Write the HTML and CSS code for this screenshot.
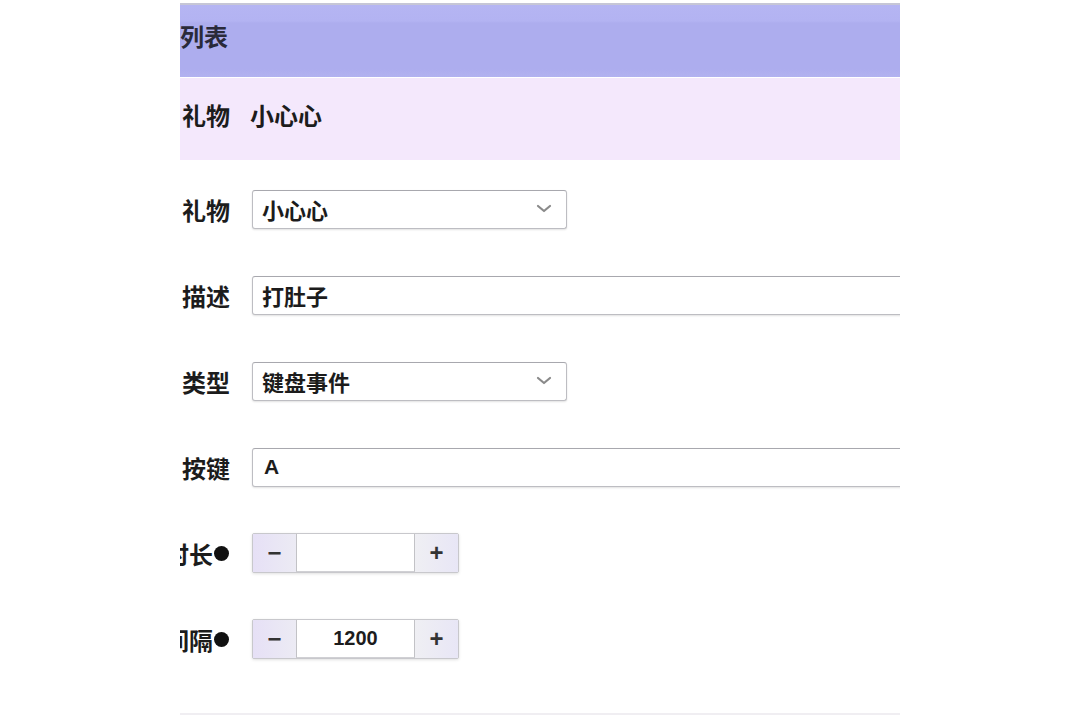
FILE: index.html
```html
<!DOCTYPE html>
<html lang="zh">
<head>
<meta charset="utf-8">
<title>礼物列表</title>
<link rel="stylesheet" href="styles.css">
</head>
<body>
<div class="clip">
  <div class="inner">
    <div class="header"><span class="header-title">列表</span></div>
    <div class="summary">
      <span class="label">礼物</span>
      <span class="summary-value">小心心</span>
    </div>
    <div class="form">
      <div class="row">
        <span class="label">礼物</span>
        <div class="select">
          <span class="value">小心心</span>
          <svg class="chev" width="16" height="10" viewBox="0 0 16 10"><path d="M2 2 L8 7 L14 2" fill="none" stroke="#8a8a8a" stroke-width="2.2" stroke-linecap="round" stroke-linejoin="round"/></svg>
        </div>
      </div>
      <div class="row">
        <span class="label">描述</span>
        <div class="input"><span class="value">打肚子</span></div>
      </div>
      <div class="row">
        <span class="label">类型</span>
        <div class="select">
          <span class="value">键盘事件</span>
          <svg class="chev" width="16" height="10" viewBox="0 0 16 10"><path d="M2 2 L8 7 L14 2" fill="none" stroke="#8a8a8a" stroke-width="2.2" stroke-linecap="round" stroke-linejoin="round"/></svg>
        </div>
      </div>
      <div class="row">
        <span class="label">按键</span>
        <div class="input"><span class="value latin">A</span></div>
      </div>
      <div class="row">
        <span class="label">时长<span class="dot"></span></span>
        <div class="stepper">
          <span class="step minus">−</span>
          <span class="num"></span>
          <span class="step plus">+</span>
        </div>
      </div>
      <div class="row">
        <span class="label">间隔<span class="dot"></span></span>
        <div class="stepper">
          <span class="step minus">−</span>
          <span class="num">1200</span>
          <span class="step plus">+</span>
        </div>
      </div>
    </div>
    <div class="footer-line"></div>
  </div>
</div>
</body>
</html>
```

FILE: styles.css
```css
html, body {
  margin: 0;
  padding: 0;
  background: #ffffff;
}

body {
  font-family: "Noto Sans CJK SC", "Liberation Sans", sans-serif;
  color: #1c1c1c;
}

.clip {
  margin-left: 180px;
  width: 720px;
  height: 720px;
  overflow: hidden;
  padding-top: 3px;
  box-sizing: border-box;
}

.inner {
  margin-left: -70px;
  width: 1000px;
}

.header {
  height: 74px;
  border-top: 2px solid #c6c6d6;
  background: linear-gradient(#b5b5f3 0, #b3b3f2 16px, #adadee 18px, #adadee 64px, #b3b3f0 74px);
  display: flex;
  align-items: center;
  padding-left: 70px;
  padding-bottom: 11px;
  box-sizing: border-box;
}

.header-title {
  font-size: 24px;
  font-weight: 700;
  color: #2a2a3a;
}

.summary {
  height: 82px;
  margin-top: 1px;
  background: #f4e8fc;
  display: flex;
  align-items: center;
  gap: 20px;
  padding-bottom: 10px;
  box-sizing: border-box;
}

.summary-value {
  font-size: 24px;
  font-weight: 700;
  color: #1c1c1c;
}

.label {
  width: 120px;
  flex: none;
  text-align: right;
  font-size: 24px;
  font-weight: 700;
  color: #1c1c1c;
  display: flex;
  justify-content: flex-end;
  align-items: center;
  white-space: nowrap;
}

.form {
  padding-top: 29px;
  display: flex;
  flex-direction: column;
  gap: 46px;
}

.row {
  height: 40px;
  display: flex;
  align-items: center;
  gap: 22px;
}

.select, .input {
  height: 39px;
  box-sizing: border-box;
  border: 1px solid #bdbdc2;
  border-top-color: #a8a8ae;
  border-radius: 3px;
  background: #fff;
  box-shadow: 0 1px 2px rgba(0, 0, 0, 0.12);
  display: flex;
  align-items: center;
  padding-left: 9px;
}

.select {
  width: 315px;
  justify-content: space-between;
  padding-right: 14px;
}

.input {
  width: 760px;
}

.value {
  font-size: 22px;
  font-weight: 700;
  color: #1c1c1c;
}

.latin {
  font-family: "Liberation Sans", sans-serif;
  font-size: 21px;
  padding-left: 2px;
}

.chev {
  display: block;
}

.dot {
  width: 15px;
  height: 15px;
  border-radius: 50%;
  background: #111;
  margin-left: 1px;
  margin-right: 1px;
}

.stepper {
  width: 207px;
  height: 40px;
  box-sizing: border-box;
  border: 1px solid #c8c8cc;
  border-radius: 2px;
  display: flex;
  box-shadow: 0 1px 3px rgba(0, 0, 0, 0.12);
  background: #eeeef3;
}

.step {
  width: 43px;
  flex: none;
  display: flex;
  align-items: center;
  justify-content: center;
  font-family: "Liberation Sans", sans-serif;
  font-size: 24px;
  font-weight: 700;
  color: #333;
}

.minus {
  background: linear-gradient(90deg, #e6e0f6, #ecebf4);
}

.plus {
  background: linear-gradient(90deg, #efeff3, #e8e6f6);
}

.num {
  flex: 1;
  background: #fff;
  border-left: 1px solid #c2c2c6;
  border-right: 1px solid #c2c2c6;
  border-bottom: 1px solid #d0d0d4;
  display: flex;
  align-items: center;
  justify-content: center;
  font-family: "Liberation Sans", sans-serif;
  font-size: 20px;
  font-weight: 700;
  color: #1c1c1c;
}

.footer-line {
  margin-top: 54px;
  height: 2px;
  background: #f0eef2;
}
```
